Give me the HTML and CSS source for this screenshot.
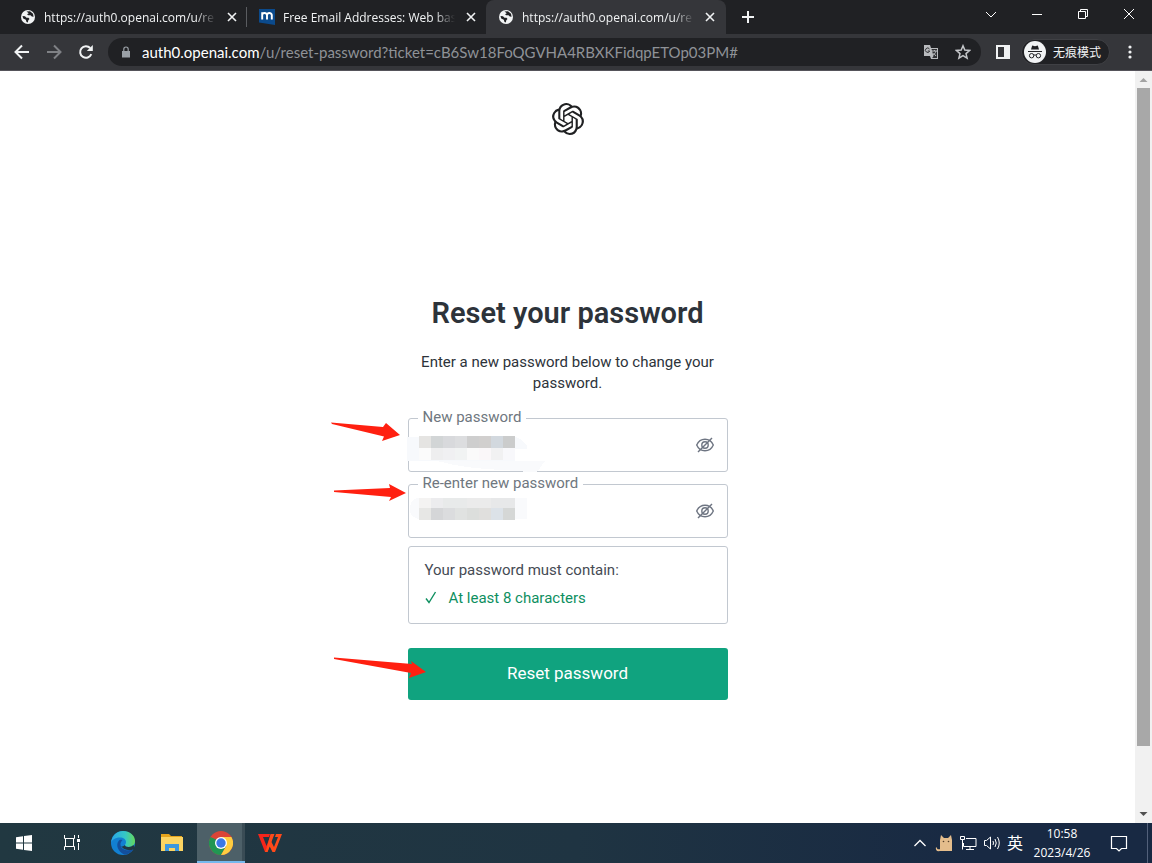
FILE: index.html
```
<!DOCTYPE html>
<html lang="en">
<head>
    <meta charset="UTF-8">
    <meta name="viewport" content="width=device-width, initial-scale=1.0">
    <title>Reset your password</title>
    <link rel="stylesheet" href="styles.css">
</head>
<body>
    <!-- Icons used more than once -->
    <svg class="defs" width="0" height="0">
        <symbol id="globe" viewBox="0 0 16 16">
            <circle cx="8" cy="8" r="7" fill="#f1f3f4"/>
            <path d="M2.5 7l2.5.3 1.500 1.400h2l1 1.300-1.200 1.300L7.800 13.500 6.500 13 5.800 10.800 3.200 9.500zM6.500 2.600L10 2.300l3 2.500.6 3-1.800-.3-1.300-1.300H8.300L7 5.300l1.800-1z" fill="#202124"/>
        </symbol>
        <symbol id="close" viewBox="0 0 16 16">
            <path d="M4 4l8 8M12 4l-8 8" stroke="#f1f3f4" stroke-width="1.600" fill="none"/>
        </symbol>
        <symbol id="eye-off" viewBox="0 0 20 18">
            <g fill="none" stroke="#6e7582" stroke-width="1.400">
                <path d="M1.700 9C3.300 5.300 6.300 3.200 10 3.200S16.700 5.300 18.300 9C16.700 12.700 13.700 14.800 10 14.800S3.300 12.700 1.700 9z"/>
                <circle cx="10" cy="9" r="3.200"/>
                <path d="M3 16L17 2"/>
            </g>
        </symbol>
    </svg>

    <div class="tab-strip">
        <div class="tab tab-divided">
            <svg class="icon"><use href="#globe"/></svg>
            <span class="tab-title">https://auth0.openai.com/u/re</span>
            <button class="tab-close" aria-label="Close tab"><svg class="icon"><use href="#close"/></svg></button>
        </div>
        <div class="tab">
            <svg class="icon" viewBox="0 0 16 16">
                <path d="M0 0h16v16L0 13.500z" fill="#0b4a8c"/>
                <path d="M3.200 10.500V3.200M3.200 6Q3.400 4 5.500 4T8 6v4.500M8 6Q8.300 4 10.300 4T12.800 6v4.500" fill="none" stroke="#fff" stroke-width="1.900"/>
            </svg>
            <span class="tab-title">Free Email Addresses: Web bas</span>
            <button class="tab-close" aria-label="Close tab"><svg class="icon"><use href="#close"/></svg></button>
        </div>
        <div class="tab tab-active">
            <svg class="icon"><use href="#globe"/></svg>
            <span class="tab-title">https://auth0.openai.com/u/re</span>
            <button class="tab-close" aria-label="Close tab"><svg class="icon"><use href="#close"/></svg></button>
        </div>
        <button class="new-tab" aria-label="New tab">
            <svg class="icon" viewBox="0 0 16 16"><path d="M8 2v12M2 8h12" stroke="#f1f3f4" stroke-width="2"/></svg>
        </button>
        <div class="window-controls">
            <button aria-label="Search tabs"><svg class="icon" viewBox="0 0 16 16"><path d="M3 6l5 5 5-5"/></svg></button>
            <button aria-label="Minimize"><svg class="icon" viewBox="0 0 16 16"><path d="M3 8.500h10"/></svg></button>
            <button aria-label="Restore"><svg class="icon" viewBox="0 0 16 16"><path d="M3.500 5.500h7v7h-7zM5.500 5.500v-2h7v7h-2"/></svg></button>
            <button aria-label="Close"><svg class="icon" viewBox="0 0 16 16"><path d="M3 3l10 10M13 3L3 13"/></svg></button>
        </div>
    </div>

    <div class="toolbar">
        <button class="nav-button" aria-label="Back">
            <svg class="icon" viewBox="0 0 16 16"><path d="M15 8H2M8 1.500L1.500 8 8 14.500" fill="none" stroke="#f1f3f4" stroke-width="2"/></svg>
        </button>
        <button class="nav-button" aria-label="Forward" disabled>
            <svg class="icon" viewBox="0 0 16 16"><path d="M1 8h13M8 1.500L14.500 8 8 14.500" fill="none" stroke="#7f8185" stroke-width="2"/></svg>
        </button>
        <button class="nav-button" aria-label="Reload">
            <svg class="icon" viewBox="0 0 16 16"><path d="M13.300 10.200A5.800 5.800 0 1 1 12.200 4" fill="none" stroke="#f1f3f4" stroke-width="2"/><path d="M14.800 1v6H8.800z" fill="#f1f3f4"/></svg>
        </button>
        <div class="address-bar">
            <svg class="lock" viewBox="0 0 10 12"><path d="M1 5h8v6.500H1z" fill="#9aa0a6"/><path d="M2.800 5V3.200a2.200 2.200 0 0 1 4.400 0V5" fill="none" stroke="#9aa0a6" stroke-width="1.200"/></svg>
            <div class="url"><span class="url-host">auth0.openai.com</span>/u/reset-password?ticket=cB6Sw18FoQGVHA4RBXKFidqpETOp03PM#</div>
            <button aria-label="Translate">
                <svg class="icon" viewBox="0 0 16 16">
                    <path d="M1 1h6l1 3h7v11H8l-1-3H1z" fill="#b9bbbe"/>
                    <path d="M8.500 5h5.500v9H9.200l1.300-2z" fill="#303134"/>
                    <path d="M6.500 5A2.200 2.200 0 1 0 6.700 7H4.800" fill="none" stroke="#303134"/>
                    <path d="M9 7h5M11.500 6v1M13 7c-.5 2-2 3.500-3 4M10.500 9l2.500 3" fill="none" stroke="#b9bbbe"/>
                </svg>
            </button>
            <button aria-label="Bookmark this page">
                <svg class="icon" viewBox="0 0 16 16"><path d="M8 1.800l1.800 4.300 4.700.4L11 9.600l1.100 4.600L8 11.700l-4.100 2.500L5 9.600 1.500 6.500l4.700-.4z" fill="none" stroke="#c4c6c9" stroke-width="1.500"/></svg>
            </button>
        </div>
        <button class="side-panel" aria-label="Side panel">
            <svg class="icon" viewBox="0 0 16 16"><path d="M1 1h14v14H1zM3 3v10h6V3z" fill="#f1f3f4" fill-rule="evenodd"/></svg>
        </button>
        <button class="profile">
            <svg class="profile-icon" viewBox="0 0 22 22">
                <circle cx="11" cy="11" r="11" fill="#f1f3f4"/>
                <path d="M7 8.500L8.200 4.500 11 5.200 13.800 4.500 15 8.500z" fill="#202124"/>
                <g fill="none" stroke="#202124"><path d="M4 10.500h14M9.700 14.300q1.300-1 2.600 0"/><circle cx="7.600" cy="14.700" r="2.200"/><circle cx="14.400" cy="14.700" r="2.200"/></g>
            </svg>
            无痕模式
        </button>
        <button class="menu-button" aria-label="Menu">
            <svg class="icon" viewBox="0 0 16 16" fill="#f1f3f4"><circle cx="8" cy="3" r="1.600"/><circle cx="8" cy="8" r="1.600"/><circle cx="8" cy="13" r="1.600"/></svg>
        </button>
    </div>

    <div class="viewport">
        <main class="page">
            <svg class="logo" viewBox="0 0 24 24"><path fill="#202123" d="M22.2819 9.8211a5.9847 5.9847 0 0 0-.5157-4.9108 6.0462 6.0462 0 0 0-6.5098-2.9A6.0651 6.0651 0 0 0 4.9807 4.1818a5.9847 5.9847 0 0 0-3.9977 2.9 6.0462 6.0462 0 0 0 .7427 7.0966 5.98 5.98 0 0 0 .511 4.9107 6.051 6.051 0 0 0 6.5146 2.9001A5.9847 5.9847 0 0 0 13.2599 24a6.0557 6.0557 0 0 0 5.7718-4.2058 5.9894 5.9894 0 0 0 3.9977-2.9001 6.0557 6.0557 0 0 0-.7475-7.0729zm-9.022 12.6081a4.4755 4.4755 0 0 1-2.8764-1.0408l.1419-.0804 4.7783-2.7582a.7948.7948 0 0 0 .3927-.6813v-6.7369l2.02 1.1686a.071.071 0 0 1 .038.052v5.5826a4.504 4.504 0 0 1-4.4945 4.4944zm-9.6607-4.1254a4.4708 4.4708 0 0 1-.5346-3.0137l.142.0852 4.783 2.7582a.7712.7712 0 0 0 .7806 0l5.8428-3.3685v2.3324a.0804.0804 0 0 1-.0332.0615L9.74 19.9502a4.4992 4.4992 0 0 1-6.1408-1.6464zM2.3408 7.8956a4.485 4.485 0 0 1 2.3655-1.9728V11.6a.7664.7664 0 0 0 .3879.6765l5.8144 3.3543-2.0201 1.1685a.0757.0757 0 0 1-.071 0l-4.8303-2.7865A4.504 4.504 0 0 1 2.3408 7.872zm16.5963 3.8558L13.1038 8.364 15.1192 7.2a.0757.0757 0 0 1 .071 0l4.8303 2.7913a4.4944 4.4944 0 0 1-.6765 8.1042v-5.6772a.79.79 0 0 0-.407-.667zm2.0107-3.0231l-.142-.0852-4.7735-2.7818a.7759.7759 0 0 0-.7854 0L9.409 9.2297V6.8974a.0662.0662 0 0 1 .0284-.0615l4.8303-2.7866a4.4992 4.4992 0 0 1 6.6802 4.66zM8.3065 12.863l-2.02-1.1638a.0804.0804 0 0 1-.038-.0567V6.0742a4.4992 4.4992 0 0 1 7.3757-3.4537l-.142.0805L8.704 5.459a.7948.7948 0 0 0-.3927.6813zm1.0976-2.3654l2.602-1.4998 2.6069 1.4998v2.9994l-2.5974 1.4997-2.6067-1.4997Z"/></svg>

            <form class="reset-form">
                <h1>Reset your password</h1>
                <p class="intro">Enter a new password below to change your password.</p>

                <div class="field">
                    <input type="password" id="new-password">
                    <label for="new-password">New password</label>
                    <button type="button" class="eye" aria-label="Show password"><svg><use href="#eye-off"/></svg></button>
                    <svg class="mosaic" viewBox="0 0 140 56" shape-rendering="crispEdges">
                        <path d="M-1 19h108q7 1 12 9v3h-12v12H-1z" fill="#f7f9fc"/>
                        <path d="M29 43h108l-8 11h-8L95 52q-35-1-66-9z" fill="#f9fafc"/>
                        <path d="M11 18h12v12h-12z" fill="#e5e4e2"/>
                        <path d="M23 18h12v12h-12z" fill="#d2d5d6"/>
                        <path d="M35 18h12v12h-12z" fill="#d8d9dc"/>
                        <path d="M47 18h12v12h-12z" fill="#dcdddf"/>
                        <path d="M59 18h12v12h-12z" fill="#cecece"/>
                        <path d="M71 18h12v12h-12z" fill="#d1cfce"/>
                        <path d="M83 18h12v12h-12z" fill="#d2d8de"/>
                        <path d="M95 18h12v12h-12z" fill="#cbcccc"/>
                        <path d="M11 30h12v12h-12z" fill="#fbfbfb"/>
                        <path d="M23 30h12v12h-12z" fill="#eeeeef"/>
                        <path d="M35 30h12v12h-12z" fill="#f0f0f2"/>
                        <path d="M47 30h12v12h-12z" fill="#f1f3f3"/>
                        <path d="M59 30h12v12h-12z" fill="#fafafa"/>
                        <path d="M71 30h12v12h-12z" fill="#faf7f9"/>
                        <path d="M83 30h12v12h-12z" fill="#f1f1f2"/>
                        <path d="M95 30h12v12h-12z" fill="#f8f8fb"/>
                    </svg>
                    <svg class="arrow" viewBox="0 0 78 30"><path d="M1 8.500L53 13 56 9 70 21 52 27 54 22.500 2 10z"/></svg>
                </div>

                <div class="field">
                    <input type="password" id="confirm-password">
                    <label for="confirm-password">Re-enter new password</label>
                    <button type="button" class="eye" aria-label="Show password"><svg><use href="#eye-off"/></svg></button>
                    <svg class="mosaic" viewBox="0 0 140 56" shape-rendering="crispEdges">
                        <path d="M10 14h109v21H14Q2 35 2 25T10 14z" fill="#f9fafc"/>
                        <path d="M11 14h12v10h-12z" fill="#f4f3f2"/>
                        <path d="M23 14h12v10h-12z" fill="#ececee"/>
                        <path d="M35 14h24v10h-24z" fill="#e8eaea"/>
                        <path d="M59 14h24v10h-24z" fill="#ebebeb"/>
                        <path d="M83 14h24v10h-24z" fill="#e7e8e9"/>
                        <path d="M11 24h12v12h-12z" fill="#e7e7e5"/>
                        <path d="M23 24h12v12h-12z" fill="#d5d6d8"/>
                        <path d="M35 24h12v12h-12z" fill="#dbdcde"/>
                        <path d="M47 24h12v12h-12z" fill="#e0e2e1"/>
                        <path d="M59 24h12v12h-12z" fill="#dcdedc"/>
                        <path d="M71 24h12v12h-12z" fill="#e0dfdd"/>
                        <path d="M83 24h12v12h-12z" fill="#dce2e8"/>
                        <path d="M95 24h12v12h-12z" fill="#d5d7d6"/>
                    </svg>
                    <svg class="arrow" viewBox="0 0 78 30"><path d="M4 10.500L60 8 59 4 76 13 59 21 61 17 4 12z"/></svg>
                </div>

                <div class="rules">
                    <div>Your password must contain:</div>
                    <div class="rule-met">
                        <svg viewBox="0 0 14 14"><path d="M1 7.500L4 11.500 10.500 1" fill="none" stroke="#0e8f5f" stroke-width="1.400"/></svg>
                        At least 8 characters
                    </div>
                </div>

                <div class="submit-row">
                    <button type="submit" class="submit">Reset password</button>
                    <svg class="arrow arrow-wide" viewBox="0 0 98 30"><path d="M4 13.500L82 20 81 17 96 28 79 34 81 29 4 15z"/></svg>
                </div>
            </form>
        </main>

        <div class="scrollbar">
            <svg class="scroll-end" viewBox="0 0 17 17"><path d="M4.500 11l4-4 4 4z" fill="#a3a3a3"/></svg>
            <div class="scroll-track"><div class="scroll-thumb"></div></div>
            <svg class="scroll-end" viewBox="0 0 17 17"><path d="M4.500 6l4 4 4-4z" fill="#505050"/></svg>
        </div>
    </div>

    <footer class="taskbar">
        <button class="task" aria-label="Start">
            <svg viewBox="0 0 24 24" fill="#fff"><path d="M4 6.300L11 5.200V11.500H4zM12 5L20 4v7.500h-8zM4 12.500h7v6.300l-7-1zM12 12.500h8V20l-8-1.100z"/></svg>
        </button>
        <button class="task" aria-label="Task view">
            <svg viewBox="0 0 24 24" fill="none" stroke="#fff"><path d="M4.500 4v3.500h10V4M4.500 19v-3.500h10V19M5.500 7.500v8M13.500 7.500v8M18.500 4v3M18.500 12v7"/><path d="M17 8h3v3h-3z" fill="#fff" stroke="none"/></svg>
        </button>
        <div class="task-apps">
            <button class="task" aria-label="Edge">
                <svg viewBox="0 0 24 24">
                    <defs>
                        <linearGradient id="edge-top"><stop offset="0" stop-color="#2aa5e8"/><stop offset=".6" stop-color="#35c8c5"/><stop offset="1" stop-color="#66d85a"/></linearGradient>
                    </defs>
                    <circle cx="12" cy="12" r="12" fill="#1280d2"/>
                    <path d="M0 12C1 4 6 0 12 0c7 0 12 4.500 12 10 0 4-3 6-6.500 6-2.500 0-3.500-1-3.500-2 0-.7 1-1 1-3 0-2.500-2.500-4.500-6-4.500C4 6.500.5 9 0 12z" fill="url(#edge-top)"/>
                    <path d="M8.500 9C6 11 5 16 9 20.500c2 2.300 4.500 3.500 6.500 3 3-1 5.700-3.200 7-5.500-4 2-12 2-13-4-.3-2 .8-4 2-5-1-.5-2-.5-3 0z" fill="#134f9d"/>
                    <path d="M14 14c0 1 1 2 3.500 2 2 0 3.700-.7 4.900-1.900L24 17l-1.500 1.200C19 20 12 19 10.300 15c1 .8 2.500.3 3.700-1z" fill="#213841"/>
                </svg>
            </button>
            <button class="task" aria-label="File Explorer">
                <svg viewBox="0 0 24 24"><path d="M1 3h8l2 2h11v3H1z" fill="#e6a41c"/><path d="M1 6h22v14H1z" fill="#fcd462"/><path d="M5 13h14v7h-4v-3H9v3H5z" fill="#3c97df"/></svg>
            </button>
            <button class="task task-active" aria-label="Chrome">
                <svg viewBox="0 0 24 24">
                    <circle cx="12" cy="12" r="12" fill="#db4437"/>
                    <path d="M1.600 6A12 12 0 0 0 12 24l5.200-9L12 12H6z" fill="#219653"/>
                    <path d="M22.400 6H12l5.200 9L12 24A12 12 0 0 0 22.400 6z" fill="#ffcd40"/>
                    <path d="M1.600 6L6.800 15 8 9z" fill="#219653"/>
                    <circle cx="12" cy="12" r="6" fill="#fff"/><circle cx="12" cy="12" r="4.700" fill="#3b78e7"/>
                </svg>
            </button>
            <button class="task" aria-label="WPS Office">
                <svg viewBox="0 0 24 24"><path d="M0 3h12l-1 3H5l3.500 9L12 6l2 3-4.500 12H7z" fill="#f5251b"/><path d="M12.500 3h4L9.500 21H7l2-5zM13 10l3 6 4-10h-3l1-3h6l-7 18h-2.500L11 14z" fill="#ff4a1a"/></svg>
            </button>
        </div>

        <div class="tray">
            <button aria-label="Show hidden icons"><svg viewBox="0 0 18 18"><path d="M3.500 12L9 6.500l5.500 5.500" fill="none" stroke="#fff" stroke-width="1.300"/></svg></button>
            <svg viewBox="0 0 18 18"><path d="M5 17V6L6 1l3 3h4l3-3 1 5v11zM5 17q-5 1-4-4l1 1q0 2 3 1z" fill="#e4bd8c"/><circle cx="8.500" cy="7.500" r=".8" fill="#55402a"/><circle cx="13.500" cy="7.500" r=".8" fill="#55402a"/></svg>
            <svg viewBox="0 0 18 18" fill="none" stroke="#fff"><path d="M7 4.500h10v8H4.500V9M11 12.500v3M7 15.500h8M1.500 2.500h4v3h-4zM3.500 5.500v10"/></svg>
            <svg viewBox="0 0 18 18" fill="none" stroke="#fff"><path d="M1.500 6.500h2l4-3.500v12l-4-3.500h-2zM10 7q1 2 0 4M12 5q2.500 4 0 8M14.500 3q3.500 6 0 12"/></svg>
            <span class="ime">英</span>
            <div class="clock"><div>10:58</div><div>2023/4/26</div></div>
            <button class="notices" aria-label="Notifications"><svg viewBox="0 0 18 18"><path d="M1.500 2.500h15v12h-5L9 17l-2.500-2.500h-5z" fill="none" stroke="#fff" stroke-width="1.200"/></svg></button>
            <div class="show-desktop"></div>
        </div>
    </footer>
</body>
</html>
```
FILE: styles.css
```
* {
    box-sizing: border-box;
}

body {
    margin: 0;
    height: 100vh;
    display: flex;
    flex-direction: column;
    overflow: hidden;
    background: #fff;
    font-family: "Open Sans", "Noto Sans CJK SC", sans-serif;
}

button {
    margin: 0;
    padding: 0;
    border: 0;
    background: none;
    color: inherit;
    font-family: inherit;
    display: flex;
    align-items: center;
    justify-content: center;
}

svg {
    display: block;
    flex: none;
}

.defs {
    position: absolute;
}

.icon {
    width: 16px;
    height: 16px;
}

/* Tabs */
.tab-strip {
    display: flex;
    height: 34px;
    padding-left: 8px;
    background: #202124;
    color: #f1f3f4;
}

.tab {
    display: flex;
    align-items: center;
    gap: 8px;
    width: 239px;
    padding: 0 7px 0 12px;
}

.tab-divided {
    background: linear-gradient(#5a5c60, #5a5c60) right center / 1px 20px no-repeat;
}

.tab-active {
    width: 240px;
    padding-right: 8px;
    background: #35363a;
    border-radius: 8px 8px 0 0;
}

.tab-title {
    flex: 1;
    min-width: 0;
    white-space: nowrap;
    font-size: 12px;
    font-weight: 500;
    -webkit-mask-image: linear-gradient(to right, #000 88%, transparent);
    mask-image: linear-gradient(to right, #000 88%, transparent);
}

.new-tab {
    width: 28px;
    margin-left: 8px;
}

.window-controls {
    display: flex;
    height: 28px;
    margin-left: auto;
}

.window-controls button {
    width: 46px;
}

.window-controls path {
    fill: none;
    stroke: #fff;
}

/* Toolbar */
.toolbar {
    display: flex;
    align-items: center;
    height: 37px;
    padding: 0 14px 0 6px;
    background: #35363a;
    border-bottom: 1px solid #55535a;
    color: #f1f3f4;
}

.nav-button {
    width: 32px;
    height: 28px;
}

.address-bar {
    display: flex;
    align-items: center;
    flex: 1;
    height: 28px;
    margin-left: 6px;
    padding: 0 10px 0 13px;
    border-radius: 14px;
    background: #202124;
}

.address-bar button {
    width: 16px;
    margin-left: 16px;
}

.lock {
    width: 10px;
    height: 12px;
    margin-right: 11px;
}

.url {
    flex: 1;
    overflow: hidden;
    white-space: nowrap;
    font-family: Lato, sans-serif;
    font-size: 15px;
    color: #8f9297;
}

.url-host {
    color: #fff;
}

.side-panel {
    margin: 0 10px 0 14px;
}

.profile {
    height: 26px;
    padding: 0 8px 0 2px;
    gap: 7px;
    border-radius: 13px;
    background: #202124;
    border: 1px solid #3f4044;
    font-size: 12px;
}

.profile-icon {
    width: 22px;
    height: 22px;
}

.menu-button {
    margin-left: 12px;
}

/* Page */
.viewport {
    display: flex;
    flex: 1;
    min-height: 0;
}

.page {
    flex: 1;
    display: flex;
    flex-direction: column;
    align-items: center;
    padding-top: 32px;
    color: #2d333a;
    font-family: Roboto, sans-serif;
    font-size: 15px;
}

.logo {
    width: 32px;
    height: 32px;
}

.reset-form {
    width: 320px;
    margin-top: 160px;
}

h1 {
    margin: 0;
    font-size: 29px;
    font-weight: 600;
    line-height: 36px;
    text-align: center;
    white-space: nowrap;
}

.intro {
    margin: 21px 0 24px;
    line-height: 21px;
    text-align: center;
}

.field {
    position: relative;
    height: 54px;
    margin-bottom: 12px;
}

.field input {
    width: 100%;
    height: 100%;
    padding: 0 52px 0 16px;
    border: 1px solid #c2c8d0;
    border-radius: 3px;
    background: #fff;
    font-size: 16px;
}

/* The label breaks the top border of its field */
.field label {
    position: absolute;
    left: 10px;
    top: -11px;
    padding: 0 5px;
    background: #fff;
    color: #6f7780;
    line-height: 20px;
}

.eye {
    position: absolute;
    right: 13px;
    top: 18px;
}

.eye svg {
    width: 20px;
    height: 18px;
}

.mosaic {
    position: absolute;
    left: 0;
    top: 0;
    width: 140px;
    height: 56px;
    overflow: visible;
    pointer-events: none;
}

.arrow {
    position: absolute;
    left: -78px;
    top: -4px;
    width: 78px;
    height: 30px;
    overflow: visible;
    fill: #ff2010;
    pointer-events: none;
}

.arrow-wide {
    width: 98px;
}

.rules {
    margin-top: -4px;
    padding: 13px 16px 15px;
    border: 1px solid #c2c8d0;
    border-radius: 3px;
    color: #454b54;
    line-height: 20px;
}

.rule-met {
    display: flex;
    align-items: center;
    gap: 10px;
    margin-top: 8px;
    color: #0e8f5f;
}

.rule-met svg {
    width: 14px;
    height: 14px;
}

.submit-row {
    position: relative;
    margin-top: 24px;
}

.submit {
    width: 100%;
    height: 52px;
    padding-bottom: 2px;
    border-radius: 3px;
    background: #10a37f;
    color: #fff;
    font-size: 17px;
}

/* Scrollbar */
.scrollbar {
    display: flex;
    flex-direction: column;
    width: 17px;
    background: #f1f1f1;
}

.scroll-end {
    width: 17px;
    height: 17px;
}

.scroll-track {
    flex: 1;
    padding: 0 2px;
}

.scroll-thumb {
    height: calc(100% * 11 / 12);
    background: #a8a8a8;
}

/* Taskbar */
.taskbar {
    display: flex;
    height: 40px;
    background: linear-gradient(to right, #213841, #1f3442 50%, #182943 85%);
    color: #fff;
}

.task {
    width: 48px;
    height: 40px;
}

.task svg {
    width: 24px;
    height: 24px;
}

.task-apps {
    display: flex;
    gap: 1px;
    margin-left: 3px;
}

.task-active {
    background: linear-gradient(to left, #3a4c55 3px, #4d6068 3px);
    box-shadow: inset 0 -2px #76b9ed;
}

.tray {
    display: flex;
    align-items: center;
    gap: 6px;
    margin-left: auto;
    padding-right: 4px;
}

.tray svg {
    width: 18px;
    height: 18px;
}

.ime {
    font-size: 16px;
    line-height: 20px;
}

.clock {
    width: 66px;
    font-size: 12px;
    line-height: 19px;
    text-align: center;
}

.notices {
    margin: 0 13px 0 9px;
}

.show-desktop {
    height: 40px;
    border-left: 1px solid #52607a;
}
```
